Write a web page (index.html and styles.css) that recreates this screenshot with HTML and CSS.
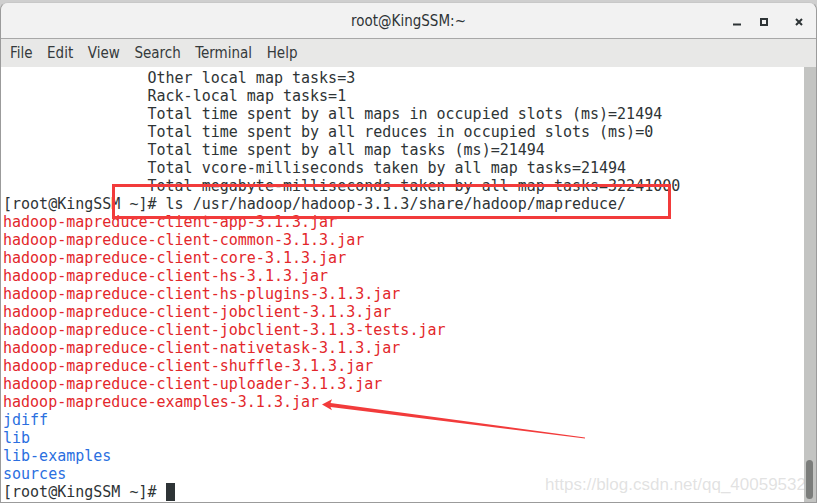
FILE: index.html
```html
<!DOCTYPE html>
<html lang="en">

<head>
    <meta charset="UTF-8">
    <meta name="viewport" content="width=device-width, initial-scale=1.0">
    <title>root@KingSSM:~</title>
    <link rel="stylesheet" href="styles.css">
</head>

<body>
    <div class="window">
        <div class="titlebar">
            <span></span>
            <span class="title">root@KingSSM:~</span>
            <div class="controls">
                <svg class="ctl ctl-min" width="8" height="8" viewBox="0 0 8 8"><rect x="0" y="5.5" width="8" height="2" fill="#2e3436"/></svg>
                <svg class="ctl ctl-max" width="8" height="8" viewBox="0 0 8 8"><rect x="1" y="1" width="6" height="6" fill="none" stroke="#2e3436" stroke-width="2"/></svg>
                <svg class="ctl ctl-close" width="8" height="8" viewBox="0 0 8 8"><path d="M1 1L7 7M7 1L1 7" stroke="#2e3436" stroke-width="2"/></svg>
            </div>
        </div>
        <div class="menubar">
            <span class="menu-item">File</span>
            <span class="menu-item">Edit</span>
            <span class="menu-item">View</span>
            <span class="menu-item">Search</span>
            <span class="menu-item">Terminal</span>
            <span class="menu-item">Help</span>
        </div>
        <div class="terminal">
            <pre class="screen">                Other local map tasks=3
                Rack-local map tasks=1
                Total time spent by all maps in occupied slots (ms)=21494
                Total time spent by all reduces in occupied slots (ms)=0
                Total time spent by all map tasks (ms)=21494
                Total vcore-milliseconds taken by all map tasks=21494
                Total megabyte-milliseconds taken by all map tasks=32241000
[root@KingSSM ~]# ls /usr/hadoop/hadoop-3.1.3/share/hadoop/mapreduce/
<span class="jar">hadoop-mapreduce-client-app-3.1.3.jar</span>
<span class="jar">hadoop-mapreduce-client-common-3.1.3.jar</span>
<span class="jar">hadoop-mapreduce-client-core-3.1.3.jar</span>
<span class="jar">hadoop-mapreduce-client-hs-3.1.3.jar</span>
<span class="jar">hadoop-mapreduce-client-hs-plugins-3.1.3.jar</span>
<span class="jar">hadoop-mapreduce-client-jobclient-3.1.3.jar</span>
<span class="jar">hadoop-mapreduce-client-jobclient-3.1.3-tests.jar</span>
<span class="jar">hadoop-mapreduce-client-nativetask-3.1.3.jar</span>
<span class="jar">hadoop-mapreduce-client-shuffle-3.1.3.jar</span>
<span class="jar">hadoop-mapreduce-client-uploader-3.1.3.jar</span>
<span class="jar">hadoop-mapreduce-examples-3.1.3.jar</span>
<span class="dir">jdiff</span>
<span class="dir">lib</span>
<span class="dir">lib-examples</span>
<span class="dir">sources</span>
[root@KingSSM ~]# <span class="cursor"> </span></pre>
            <div class="scrollbar">
                <div class="thumb"></div>
            </div>

            <!-- 标注 -->
            <div class="mark-box"></div>
            <svg class="mark-arrow" width="817" height="437" viewBox="0 0 817 437">
                <polygon points="322,337.5 332,332.3 330.5,336 585,370.4 585,371.6 330.5,340 332,343.2" fill="#f23b3b"/>
            </svg>
            <div class="watermark">https://blog.csdn.net/qq_40059532</div>
        </div>
    </div>
</body>

</html>
```

FILE: styles.css
```css
body {
    margin: 0;
    height: 503px;
    overflow: hidden;
    background: #cfcfcf;
}

.window {
    margin-top: 2px;
    height: 499px;
    display: flex;
    flex-direction: column;
    border: 1px solid #9b9b9b;
    border-top-color: #c8c8c8;
    border-radius: 8px 8px 0 0;
    background: #e8e8e7;
    overflow: hidden;
}

.titlebar {
    display: grid;
    grid-template-columns: 1fr auto 1fr;
    align-items: center;
    height: 35px;
    background: #f2f2f2;
    border-bottom: 1px solid #a8a8a8;
    font-family: "DejaVu Sans Condensed", "DejaVu Sans", sans-serif;
    font-size: 15px;
    color: #2e3436;
}

.titlebar .title {
    padding-top: 1px;
}

.controls {
    display: flex;
    justify-content: flex-end;
    align-items: center;
    padding-right: 13px;
    padding-top: 2px;
}

.ctl-max {
    margin-left: 19px;
}

.ctl-close {
    margin-left: 27px;
}

.menubar {
    display: flex;
    align-items: center;
    height: 28px;
    padding-left: 9px;
    gap: 14.6px;
    background: #e8e8e7;
    font-family: "DejaVu Sans Condensed", "DejaVu Sans", sans-serif;
    font-size: 15px;
    color: #353a3c;
}

.terminal {
    position: relative;
    flex: 1;
    display: flex;
    background: #fff;
}

.screen {
    flex: 1;
    margin: 0;
    padding: 2px 0 0 2px;
    font-family: "DejaVu Sans Mono", monospace;
    font-size: 15px;
    line-height: 18px;
    color: #2e3436;
}

.screen .jar {
    color: #e3272b;
}

.screen .dir {
    color: #2b6fe0;
}

.screen .cursor {
    display: inline-block;
    width: 9px;
    background: #2e3436;
}

.scrollbar {
    position: relative;
    width: 12px;
    background: #c3c4c2;
}

.scrollbar .thumb {
    position: absolute;
    left: 2px;
    bottom: 3px;
    width: 7px;
    height: 39px;
    border-radius: 4px;
    background: #7b7d7b;
}

.mark-box {
    position: absolute;
    left: 111px;
    top: 117px;
    width: 553px;
    height: 29px;
    border: 3px solid #f23b3b;
}

.mark-arrow {
    position: absolute;
    left: -1px;
    top: 0;
}

.watermark {
    position: absolute;
    right: 10px;
    top: 408px;
    font-family: "Liberation Sans", Arial, sans-serif;
    font-size: 17px;
    line-height: 20px;
    color: rgba(190, 190, 190, .45);
}
```
